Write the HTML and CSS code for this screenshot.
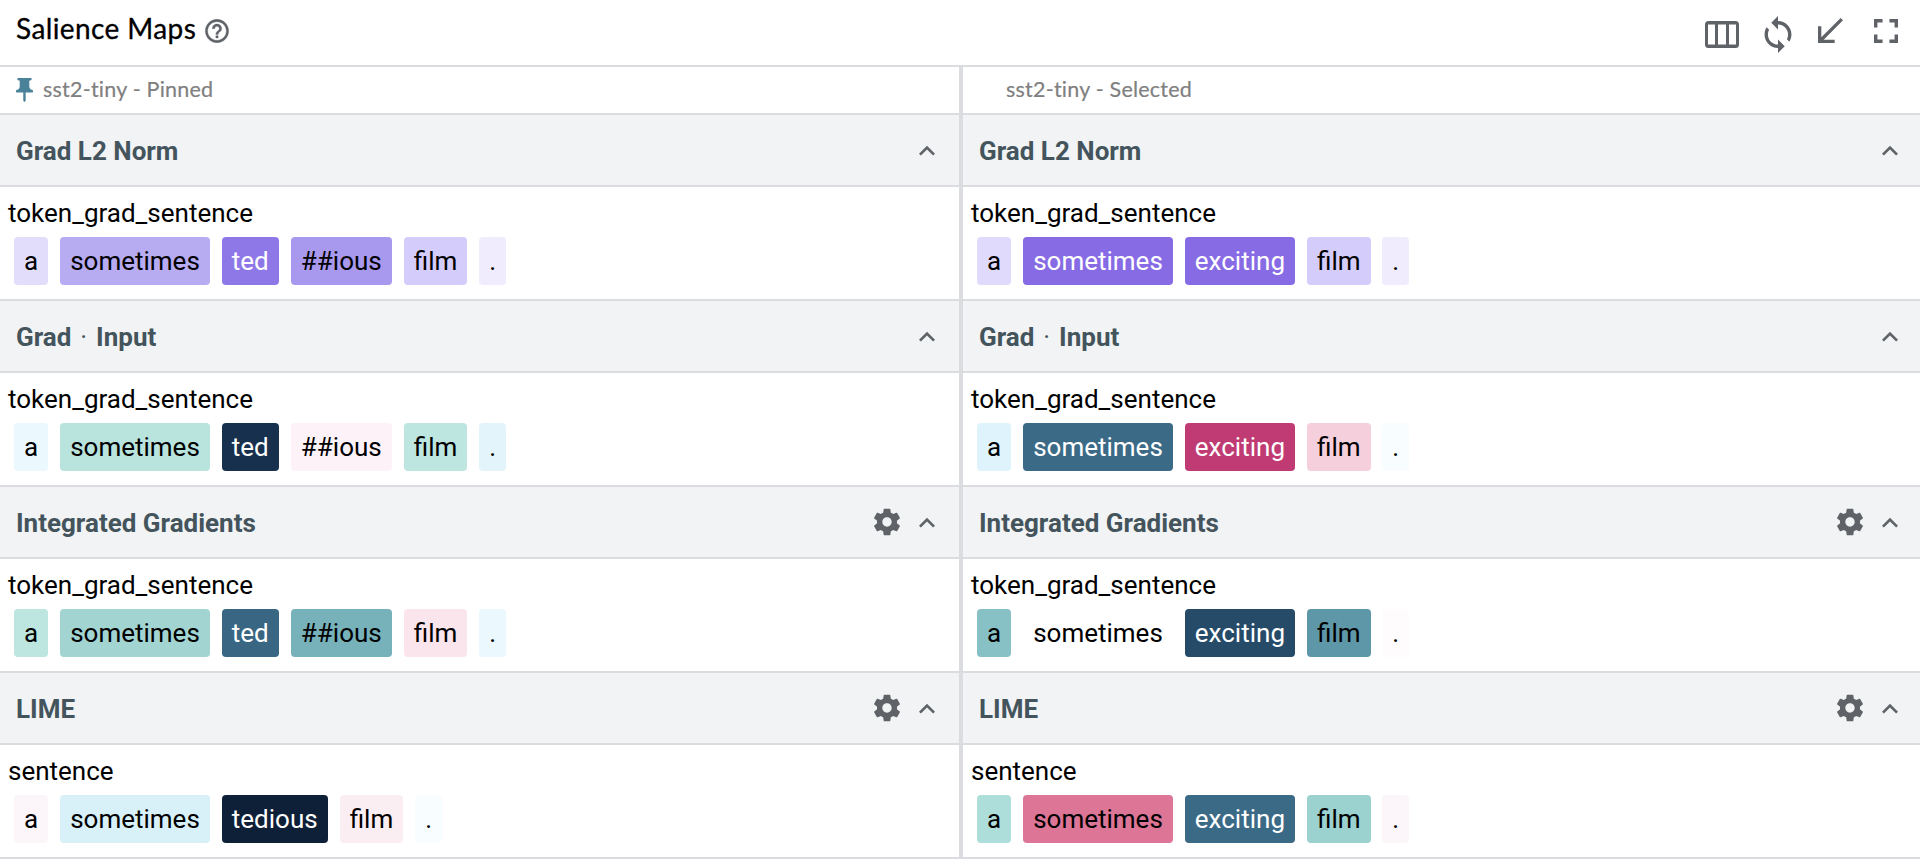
FILE: index.html
```html
<!DOCTYPE html>
<html lang="en">
<head>
<meta charset="utf-8">
<title>Salience Maps</title>
<link rel="stylesheet" href="styles.css">
</head>
<body>
<svg class="defs" aria-hidden="true">
  <symbol id="chevron" viewBox="0 0 24 24"><path d="M12 8l-6 6 1.41 1.41L12 10.83l4.59 4.58L18 14z"/></symbol>
  <symbol id="gear" viewBox="0 0 24 24"><path d="M19.43 12.98c.04-.32.07-.64.07-.98s-.03-.66-.07-.98l2.11-1.65c.19-.15.24-.42.12-.64l-2-3.46c-.12-.22-.39-.3-.61-.22l-2.49 1c-.52-.4-1.08-.73-1.69-.98l-.38-2.65C14.46 2.18 14.25 2 14 2h-4c-.25 0-.46.18-.49.42l-.38 2.65c-.61.25-1.17.59-1.69.98l-2.49-1c-.23-.09-.49 0-.61.22l-2 3.46c-.13.22-.07.49.12.64l2.11 1.65c-.04.32-.07.65-.07.98s.03.66.07.98l-2.11 1.65c-.19.15-.24.42-.12.64l2 3.46c.12.22.39.3.61.22l2.49-1c.52.4 1.08.73 1.69.98l.38 2.65c.03.24.24.42.49.42h4c.25 0 .46-.18.49-.42l.38-2.65c.61-.25 1.17-.59 1.69-.98l2.49 1c.23.09.49 0 .61-.22l2-3.46c.12-.22.07-.49-.12-.64l-2.11-1.65zM12 15.5c-1.93 0-3.5-1.57-3.5-3.5s1.57-3.5 3.5-3.5 3.5 1.57 3.5 3.5-1.57 3.5-3.5 3.5z"/></symbol>
</svg>
<header class="titlebar">
  <h1 class="title">Salience Maps</h1>
  <svg class="help" viewBox="0 0 24 24"><path d="M11 18h2v-2h-2v2zm1-16C6.48 2 2 6.48 2 12s4.48 10 10 10 10-4.48 10-10S17.52 2 12 2zm0 18c-4.41 0-8-3.59-8-8s3.59-8 8-8 8 3.59 8 8-3.59 8-8 8zm0-14c-2.21 0-4 1.79-4 4h2c0-1.1.9-2 2-2s2 .9 2 2c0 2-3 1.75-3 5h2c0-2.25 3-2.5 3-5 0-2.21-1.79-4-4-4z"/></svg>
  <div class="actions">
    <svg class="act columns" viewBox="0 0 34 28"><path fill-rule="evenodd" d="M3.500 0h27a3.500 3.500 0 0 1 3.500 3.500v20a3.500 3.500 0 0 1-3.500 3.500h-27a3.500 3.500 0 0 1-3.500-3.500v-20a3.500 3.500 0 0 1 3.500-3.500zM3 3.500v20h7v-20zM13 3.500v20h8v-20zM24 3.500v20h7v-20z"/></svg>
    <svg class="act sync" viewBox="4 1 16 22"><path d="M12 4V1L8 5l4 4V6c3.310 0 6 2.690 6 6 0 1.010-.25 1.970-.7 2.800l1.460 1.460C19.540 15.030 20 13.570 20 12c0-4.420-3.580-8-8-8zm0 14c-3.310 0-6-2.690-6-6 0-1.010.25-1.970.7-2.800L5.240 7.740C4.460 8.970 4 10.430 4 12c0 4.420 3.580 8 8 8v3l4-4-4-4v3z"/></svg>
    <svg class="act arrow" viewBox="5 4 15 15"><path d="M20 5.410 18.590 4 7 15.590V9H5v10h10v-2H8.410z"/></svg>
    <svg class="act full" viewBox="5 5 14 14"><path d="M7 14H5v5h5v-2H7v-3zm-2-4h2V7h3V5H5v5zm12 7h-3v2h5v-5h-2v3zM14 5v2h3v3h2V5h-5z"/></svg>
  </div>
</header>
<main class="columns-wrap">
  <section class="model">
    <div class="model-name"><svg class="pin" viewBox="5 2 14 20"><path d="M16 9V4h1c.55 0 1-.45 1-1s-.45-1-1-1H7c-.55 0-1 .45-1 1s.45 1 1 1h1v5c0 1.660-1.340 3-3 3v2h5.970v7l1 1 1-1v-7H19v-2c-1.660 0-3-1.340-3-3z"/></svg><span>sst2-tiny - Pinned</span></div>
    <h2 class="method"><span>Grad L2 Norm</span><svg class="chev"><use href="#chevron"/></svg></h2>
    <div class="field"><div class="field-name">token_grad_sentence</div>
      <div class="tokens"><span class="t c1">a</span><span class="t c2">sometimes</span><span class="t c3 light">ted</span><span class="t c4">##ious</span><span class="t c5">film</span><span class="t c6">.</span></div></div>
    <h2 class="method"><span>Grad <span class="dot">·</span> Input</span><svg class="chev"><use href="#chevron"/></svg></h2>
    <div class="field"><div class="field-name">token_grad_sentence</div>
      <div class="tokens"><span class="t c7">a</span><span class="t c8">sometimes</span><span class="t c9 light">ted</span><span class="t c10">##ious</span><span class="t c11">film</span><span class="t c12">.</span></div></div>
    <h2 class="method"><span>Integrated Gradients</span><svg class="gear"><use href="#gear"/></svg><svg class="chev"><use href="#chevron"/></svg></h2>
    <div class="field"><div class="field-name">token_grad_sentence</div>
      <div class="tokens"><span class="t c13">a</span><span class="t c14">sometimes</span><span class="t c15 light">ted</span><span class="t c16">##ious</span><span class="t c17">film</span><span class="t c18">.</span></div></div>
    <h2 class="method"><span>LIME</span><svg class="gear"><use href="#gear"/></svg><svg class="chev"><use href="#chevron"/></svg></h2>
    <div class="field"><div class="field-name">sentence</div>
      <div class="tokens"><span class="t c19">a</span><span class="t c20">sometimes</span><span class="t c21 light">tedious</span><span class="t c22">film</span><span class="t c23">.</span></div></div>
  </section>
  <section class="model selected">
    <div class="model-name"><span class="pin"></span><span>sst2-tiny - Selected</span></div>
    <h2 class="method"><span>Grad L2 Norm</span><svg class="chev"><use href="#chevron"/></svg></h2>
    <div class="field"><div class="field-name">token_grad_sentence</div>
      <div class="tokens"><span class="t c24">a</span><span class="t c25 light">sometimes</span><span class="t c25 light">exciting</span><span class="t c5">film</span><span class="t c6">.</span></div></div>
    <h2 class="method"><span>Grad <span class="dot">·</span> Input</span><svg class="chev"><use href="#chevron"/></svg></h2>
    <div class="field"><div class="field-name">token_grad_sentence</div>
      <div class="tokens"><span class="t c26">a</span><span class="t c27 light">sometimes</span><span class="t c28 light">exciting</span><span class="t c29">film</span><span class="t c23">.</span></div></div>
    <h2 class="method"><span>Integrated Gradients</span><svg class="gear"><use href="#gear"/></svg><svg class="chev"><use href="#chevron"/></svg></h2>
    <div class="field"><div class="field-name">token_grad_sentence</div>
      <div class="tokens"><span class="t c30">a</span><span class="t">sometimes</span><span class="t c31 light">exciting</span><span class="t c32">film</span><span class="t c33">.</span></div></div>
    <h2 class="method"><span>LIME</span><svg class="gear"><use href="#gear"/></svg><svg class="chev"><use href="#chevron"/></svg></h2>
    <div class="field"><div class="field-name">sentence</div>
      <div class="tokens"><span class="t c34">a</span><span class="t c35">sometimes</span><span class="t c27 light">exciting</span><span class="t c36">film</span><span class="t c19">.</span></div></div>
  </section>
</main>
</body>
</html>
```
FILE: styles.css
```css
* { box-sizing: border-box; }
body { margin: 0; background: #fff; color: #000; font-family: Roboto, sans-serif; overflow: hidden; }
svg { fill: #5f6368; flex: none; display: block; }
.defs { position: absolute; width: 0; height: 0; }

.titlebar { height: 67px; border-bottom: 2px solid #dadce0; display: flex; padding: 0 22px 0 16px; }
.title { margin: 0; font: 400 28px/57px Lato, sans-serif; letter-spacing: .4px; width: 188px; white-space: nowrap; -webkit-text-stroke: .3px #000; }
.help { width: 28px; height: 28px; margin-top: 17px; margin-left: -1px; stroke: #5f6368; stroke-width: .3px; }
.actions { margin-left: auto; display: flex; align-items: flex-start; }
.columns { width: 34px; height: 28px; margin: 21px 25px 0 0; }
.sync { width: 28px; height: 37px; margin: 16px 26px 0 0; }
.arrow { width: 25px; height: 25px; margin: 18px 31px 0 0; }
.full { width: 24px; height: 24px; margin-top: 19px; }

.columns-wrap { display: grid; grid-template-columns: 959px 957px; column-gap: 4px; background: #dadce0; height: 792px; }
.model { background: #fff; }
.model-name { height: 48px; border-bottom: 2px solid #dadce0; display: flex; align-items: center; gap: 10px; padding-left: 16px; color: #808080; font: 400 21.500px/44px Lato, sans-serif; letter-spacing: .22px; -webkit-text-stroke: .2px #808080; }
.model-name span { height: 46px; }
.pin { width: 17px; height: 24px; fill: #4a8299; }
.method { margin: 0; height: 72px; background: #f1f3f4; border-bottom: 2px solid #dadce0; display: flex; align-items: center; padding: 0 16px; color: #44545c; font-size: 26px; line-height: 31px; font-weight: 700; }
.selected .method { padding-right: 14px; }
.method > span { margin-right: auto; padding-top: 3px; }
.dot { font-weight: 400; margin: 0 2.500px; }
.gear { width: 32px; height: 32px; margin-right: 8px; }
.chev { width: 32px; height: 32px; margin-top: 1px; }
.field { height: 114px; border-bottom: 2px solid #dadce0; }
.field-name { height: 50px; padding: 11px 8px 0; font-size: 26px; line-height: 31px; }
.tokens { display: flex; gap: 12px; padding-left: 14px; }
.t { height: 48px; border-radius: 4px; padding: 0 10px; font-size: 26px; line-height: 48px; }
.selected .t:last-child { margin-left: -.4px; }
.light { color: #fff; }

.c1 { background: #e3ddfc; }
.c2 { background: #b7abf2; }
.c3 { background: #8e78e8; }
.c4 { background: #a899ee; }
.c5 { background: #d4ccfb; }
.c6 { background: #f0ecfe; }
.c7 { background: #ebf8fd; }
.c8 { background: #b9e4de; }
.c9 { background: #17304e; }
.c10 { background: #fdf2f7; }
.c11 { background: #bde6e1; }
.c12 { background: #e3f5fb; }
.c13 { background: #bde6e1; }
.c14 { background: #a2d5d2; }
.c15 { background: #386683; }
.c16 { background: #77b2bb; }
.c17 { background: #fbe5ec; }
.c18 { background: #ebf8fe; }
.c19 { background: #fcf5f9; }
.c20 { background: #d8f1f9; }
.c21 { background: #0e2037; }
.c22 { background: #faeef2; }
.c23 { background: #f8feff; }
.c24 { background: #e0dafc; }
.c25 { background: #876be5; }
.c26 { background: #def3fb; }
.c27 { background: #3b6a87; }
.c28 { background: #c03b74; }
.c29 { background: #f6cfdc; }
.c30 { background: #87c1c5; }
.c31 { background: #264b69; }
.c32 { background: #5e98a8; }
.c33 { background: #fffcfe; }
.c34 { background: #aededa; }
.c35 { background: #dc7596; }
.c36 { background: #9bd1cf; }
```
